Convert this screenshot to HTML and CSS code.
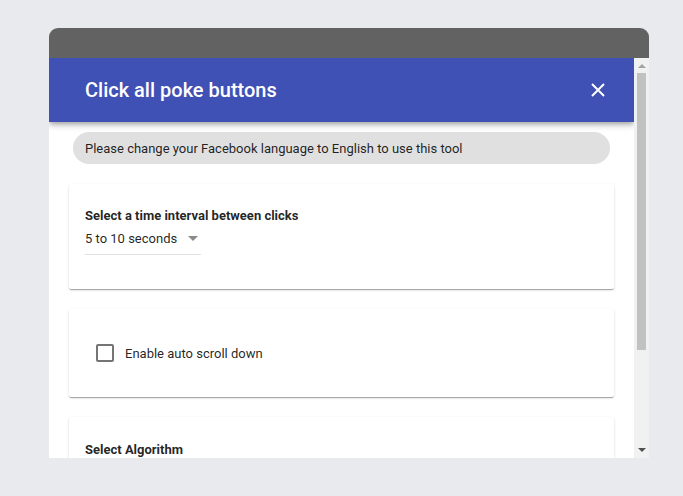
FILE: index.html
```html
<!DOCTYPE html>
<html>
<head>
<meta charset="utf-8">
<link rel="stylesheet" href="styles.css">
</head>
<body>
<div class="frame">
  <div class="frame-top"></div>
  <div class="frame-body">
    <div class="viewport">
      <header class="toolbar">
        <span class="title">Click all poke buttons</span>
        <svg class="close" width="14" height="14" viewBox="0 0 14 14"><path d="M1 1L13 13M13 1L1 13" stroke="#fff" stroke-width="2" fill="none"/></svg>
      </header>
      <div class="content">
        <div class="notice">Please change your Facebook language to English to use this tool</div>
        <div class="card card-interval">
          <div class="label">Select a time interval between clicks</div>
          <div class="select">
            <span>5 to 10 seconds</span>
            <span class="arrow"></span>
          </div>
        </div>
        <div class="card card-check">
          <span class="checkbox"></span>
          <span class="check-label">Enable auto scroll down</span>
        </div>
        <div class="card card-algo">
          <div class="label">Select Algorithm</div>
        </div>
      </div>
    </div>
    <div class="scrollbar">
      <span class="sb-up"></span>
      <div class="sb-thumb"></div>
      <span class="sb-down"></span>
    </div>
  </div>
</div>
</body>
</html>
```
FILE: styles.css
```css
html, body {
  margin: 0;
  padding: 0;
  background: #e9eaee;
  font-family: Roboto, "Liberation Sans", sans-serif;
}
body {
  padding: 28px 0 0 49px;
}
.frame {
  width: 600px;
  height: 430px;
  display: flex;
  flex-direction: column;
}
.frame-top {
  height: 30px;
  background: #626262;
  border-radius: 9px 9px 0 0;
  flex: none;
}
.frame-body {
  flex: 1;
  display: flex;
  min-height: 0;
  background: #fff;
}
.viewport {
  width: 585px;
  overflow: hidden;
  position: relative;
}
.toolbar {
  height: 64px;
  background: #3f51b5;
  display: flex;
  align-items: center;
  justify-content: space-between;
  padding: 0 29px 0 36px;
  box-shadow: 0 2px 4px -1px rgba(0,0,0,.2), 0 4px 5px 0 rgba(0,0,0,.14), 0 1px 10px 0 rgba(0,0,0,.12);
  position: relative;
  z-index: 2;
}
.title {
  color: #fff;
  font-size: 20px;
  font-weight: 500;
}
.close {
  display: block;
}
.content {
  padding: 10px 20px 0 20px;
  display: flex;
  flex-direction: column;
}
.notice {
  margin: 0 4px;
  height: 32px;
  border-radius: 16px;
  background: #e0e0e0;
  color: rgba(0,0,0,.87);
  font-size: 13px;
  display: flex;
  align-items: center;
  padding-left: 12px;
  margin-bottom: 20px;
}
.card {
  background: #fff;
  border-radius: 2px;
  box-shadow: 0 2px 1px -1px rgba(0,0,0,.2), 0 1px 1px 0 rgba(0,0,0,.14), 0 1px 3px 0 rgba(0,0,0,.12);
  margin-bottom: 20px;
  padding: 0 16px;
  flex: none;
}
.label {
  font-size: 13px;
  font-weight: 700;
  color: rgba(0,0,0,.87);
  line-height: 15px;
}
.card-interval {
  height: 105px;
  padding-top: 24px;
  box-sizing: border-box;
}
.select {
  margin-top: 2px;
  width: 116px;
  height: 30px;
  border-bottom: 1px solid #e0e0e0;
  display: flex;
  align-items: center;
  font-size: 13px;
  color: rgba(0,0,0,.87);
  box-sizing: border-box;
  padding-bottom: 2px;
}
.arrow {
  margin-left: 11px;
  width: 0;
  height: 0;
  border-left: 5px solid transparent;
  border-right: 5px solid transparent;
  border-top: 5px solid #8a8a8a;
}
.card-check {
  height: 88px;
  display: flex;
  align-items: center;
  padding-left: 27px;
  box-sizing: border-box;
}
.checkbox {
  width: 14px;
  height: 14px;
  border: 2px solid #757575;
  border-radius: 2px;
  margin-right: 11px;
}
.check-label {
  font-size: 13px;
  color: rgba(0,0,0,.87);
}
.card-algo {
  height: 100px;
  padding-top: 25px;
  box-sizing: border-box;
}
.scrollbar {
  width: 15px;
  background: #f1f1f1;
  display: flex;
  flex-direction: column;
  align-items: center;
}
.sb-up {
  margin-top: 6px;
  width: 0;
  height: 0;
  border-left: 4px solid transparent;
  border-right: 4px solid transparent;
  border-bottom: 4px solid #a3a3a3;
}
.sb-thumb {
  margin-top: 5px;
  width: 9px;
  height: 277px;
  background: #c1c1c1;
}
.sb-down {
  margin-top: auto;
  margin-bottom: 6px;
  width: 0;
  height: 0;
  border-left: 4px solid transparent;
  border-right: 4px solid transparent;
  border-top: 4px solid #505050;
}
```
